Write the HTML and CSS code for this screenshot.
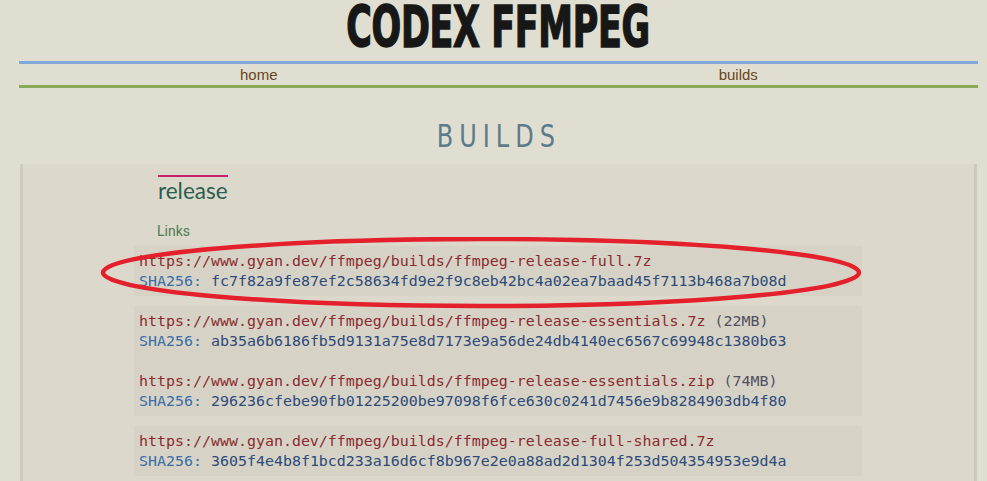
FILE: index.html
```html
<!DOCTYPE html>
<html>
<head>
<meta charset="utf-8">
<link rel="stylesheet" href="styles.css">
</head>
<body>
<div class="page">
  <header class="site-header">
    <h1 class="site-title"><span>CODEX FFMPEG</span></h1>
    <nav class="nav">
      <a class="nav-item" href="#">home</a>
      <a class="nav-item" href="#">builds</a>
    </nav>
  </header>
  <h2 class="page-title"><span>BUILDS</span></h2>
  <section class="content">
    <div class="release">
      <h3 class="release-title">release</h3>
      <p class="links-label">Links</p>
    </div>
    <div class="code-blocks">
      <pre class="code"><span class="url">https://www.gyan.dev/ffmpeg/builds/ffmpeg-release-full.7z</span>
<span class="lbl">SHA256:</span> <span class="hash">fc7f82a9fe87ef2c58634fd9e2f9c8eb42bc4a02ea7baad45f7113b468a7b08d</span></pre>
      <pre class="code"><span class="url">https://www.gyan.dev/ffmpeg/builds/ffmpeg-release-essentials.7z</span> <span class="size">(22MB)</span>
<span class="lbl">SHA256:</span> <span class="hash">ab35a6b6186fb5d9131a75e8d7173e9a56de24db4140ec6567c69948c1380b63</span>

<span class="url">https://www.gyan.dev/ffmpeg/builds/ffmpeg-release-essentials.zip</span> <span class="size">(74MB)</span>
<span class="lbl">SHA256:</span> <span class="hash">296236cfebe90fb01225200be97098f6fce630c0241d7456e9b8284903db4f80</span></pre>
      <pre class="code"><span class="url">https://www.gyan.dev/ffmpeg/builds/ffmpeg-release-full-shared.7z</span>
<span class="lbl">SHA256:</span> <span class="hash">3605f4e4b8f1bcd233a16d6cf8b967e2e0a88ad2d1304f253d504354953e9d4a</span></pre>
    </div>
  </section>
</div>
<svg class="annotation" width="770" height="76" viewBox="0 0 770 76">
  <ellipse cx="381" cy="35.5" rx="378" ry="33.5" fill="none" stroke="#e3202b" stroke-width="4.5"/>
</svg>
</body>
</html>
```
FILE: styles.css
```css
html, body {
  margin: 0;
  padding: 0;
  background: #e0ded1;
  overflow: hidden;
}
body {
  position: relative;
  height: 481px;
}
.page {
  margin-left: 19px;
  width: 959px;
  height: 481px;
  overflow: hidden;
}
.site-header {
  display: flex;
  flex-direction: column;
}
.site-title {
  margin: 0;
  height: 61px;
  text-align: center;
  font-family: "DejaVu Sans Condensed", "DejaVu Sans", sans-serif;
  font-weight: bold;
  font-size: 57px;
  line-height: 55px;
  color: #171717;
}
.site-title span {
  display: inline-block;
  transform: scaleX(0.68);
  -webkit-text-stroke: 1.5px #171717;
  letter-spacing: -0.5px;
}
.nav {
  display: grid;
  grid-template-columns: 1fr 1fr;
  border-top: 3px solid #80a8d9;
  border-bottom: 3px solid #88ab58;
  height: 21px;
}
.nav-item {
  text-align: center;
  font-family: "Liberation Sans", Arial, sans-serif;
  font-size: 15px;
  line-height: 21px;
  color: #6a4519;
  text-decoration: none;
}
.page-title {
  margin: 0;
  padding-top: 30px;
  height: 46px;
  text-align: center;
  font-family: "DejaVu Sans", sans-serif;
  font-weight: normal;
  font-size: 32px;
  line-height: 36px;
  color: #5b7b8c;
}
.page-title span {
  display: inline-block;
  transform: scaleX(0.75);
  letter-spacing: 8px;
}
.content {
  background: #dcd9cc;
  border-left: 3px solid #cdcabd;
  border-right: 3px solid #cdcabd;
  margin-left: 1px;
  margin-right: 1px;
  padding-top: 11px;
  height: 308px;
}
.release {
  padding-left: 135px;
}
.release-title {
  display: inline-block;
  margin: 0;
  border-top: 2px solid #c8206a;
  font-family: Lato, "Open Sans", sans-serif;
  font-weight: normal;
  font-size: 22.5px;
  line-height: 28px;
  color: #2a5e4e;
}
.links-label {
  margin: 17px 0 0 -1px;
  font-family: Roboto, "Noto Sans", sans-serif;
  font-size: 14px;
  line-height: 18px;
  color: #4c7c50;
}
.code-blocks {
  margin-top: 6px;
  padding-left: 111px;
  display: flex;
  flex-direction: column;
  gap: 10px;
}
.code {
  margin: 0;
  width: 718px;
  padding: 5px 5px;
  background: #d6d3c6;
  font-family: "DejaVu Sans Mono", "Liberation Mono", monospace;
  font-size: 14.95px;
  line-height: 20px;
}
.url { color: #8c2a2e; }
.lbl { color: #3a6ea6; }
.hash { color: #2c4a7a; }
.size { color: #4e5062; }
.annotation {
  position: absolute;
  left: 100px;
  top: 237px;
}
```
